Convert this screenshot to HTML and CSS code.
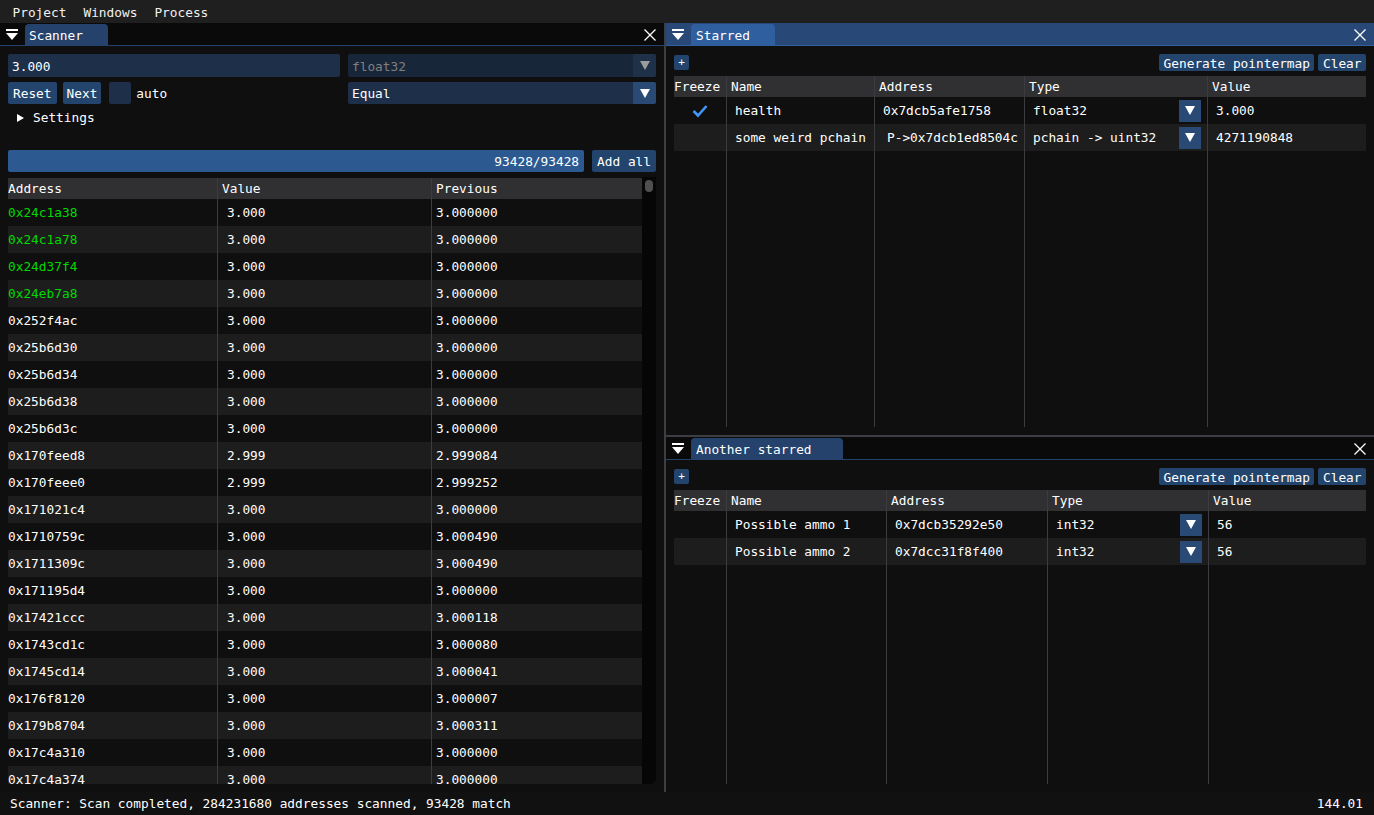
FILE: index.html
```html
<!DOCTYPE html>
<html lang="en">
<head>
  <meta charset="UTF-8">
  <title>Scanner</title>
  <link rel="stylesheet" href="styles.css">
</head>
<body>
  <div class="menubar">
    <span class="menu-item">Project</span>
    <span class="menu-item">Windows</span>
    <span class="menu-item">Process</span>
  </div>

  <div class="workspace">
    <!-- scanner window -->
    <section class="window scanner">
      <div class="tabbar">
        <span class="menu-btn"><svg width="12" height="12" viewBox="0 0 12 12"><rect x="0" y="0" width="12" height="2" fill="#fff"/><polygon points="0,4 12,4 6,11" fill="#fff"/></svg></span>
        <span class="tab tab-scanner">Scanner</span>
        <span class="close-btn"><svg width="12" height="12" viewBox="0 0 12 12"><path d="M0.5 0.5 L11.5 11.5 M11.5 0.5 L0.5 11.5" stroke="#fff" stroke-width="1.3"/></svg></span>
      </div>
      <div class="body">
        <div class="controls">
          <div class="frame input">3.000</div>
          <div class="frame combo disabled">
            <span class="combo-text">float32</span>
            <span class="combo-arrow"><svg width="10" height="9" viewBox="0 0 10 9"><polygon points="0,0 10,0 5,9" fill="#9c9c9c"/></svg></span>
          </div>
          <div class="btn-row">
            <span class="btn">Reset</span>
            <span class="btn">Next</span>
            <span class="checkbox"></span>
            <span class="check-label">auto</span>
          </div>
          <div class="frame combo">
            <span class="combo-text">Equal</span>
            <span class="combo-arrow"><svg width="10" height="9" viewBox="0 0 10 9"><polygon points="0,0 10,0 5,9" fill="#fff"/></svg></span>
          </div>
        </div>

        <div class="tree-node">
          <svg width="7" height="8" viewBox="0 0 7 8"><polygon points="0,0 7,4 0,8" fill="#fff"/></svg>
          <span>Settings</span>
        </div>

        <div class="progress-row">
          <div class="progress">93428/93428</div>
          <span class="btn">Add all</span>
        </div>

        <div class="scan-area">
          <div class="scan-table" id="scanTable">
            <div class="row scan-row header">
              <div class="cell">Address</div>
              <div class="cell">Value</div>
              <div class="cell">Previous</div>
            </div>
          </div>
          <div class="scrollbar"><div class="thumb"></div></div>
        </div>
      </div>
    </section>

    <div class="vsplit"></div>

    <div class="right-col">
      <!-- starred window -->
      <section class="window starred">
        <div class="tabbar focused">
          <span class="menu-btn"><svg width="12" height="12" viewBox="0 0 12 12"><rect x="0" y="0" width="12" height="2" fill="#fff"/><polygon points="0,4 12,4 6,11" fill="#fff"/></svg></span>
          <span class="tab tab-starred">Starred</span>
          <span class="close-btn"><svg width="12" height="12" viewBox="0 0 12 12"><path d="M0.5 0.5 L11.5 11.5 M11.5 0.5 L0.5 11.5" stroke="#fff" stroke-width="1.3"/></svg></span>
        </div>
        <div class="body">
          <div class="tools">
            <span class="btn small">+</span>
            <span class="btn tool right">Generate pointermap</span>
            <span class="btn tool">Clear</span>
          </div>
          <div class="star-table">
            <div class="row star-a header">
              <div class="cell">Freeze</div>
              <div class="cell">Name</div>
              <div class="cell">Address</div>
              <div class="cell">Type</div>
              <div class="cell">Value</div>
            </div>
            <div class="row star-a item">
              <div class="cell freeze"><svg width="16" height="14" viewBox="0 0 16 14"><polyline points="1.5,7 6,11.5 14.5,2" fill="none" stroke="#4296fa" stroke-width="2.6"/></svg></div>
              <div class="cell">health</div>
              <div class="cell">0x7dcb5afe1758</div>
              <div class="cell type">float32<span class="combo-arrow cell-arrow"><svg width="10" height="9" viewBox="0 0 10 9"><polygon points="0,0 10,0 5,9" fill="#fff"/></svg></span></div>
              <div class="cell">3.000</div>
            </div>
            <div class="row star-a item alt">
              <div class="cell freeze"></div>
              <div class="cell">some weird pchain</div>
              <div class="cell wide-pad">P-&gt;0x7dcb1ed8504c</div>
              <div class="cell type">pchain -&gt; uint32<span class="combo-arrow cell-arrow"><svg width="10" height="9" viewBox="0 0 10 9"><polygon points="0,0 10,0 5,9" fill="#fff"/></svg></span></div>
              <div class="cell">4271190848</div>
            </div>
            <div class="row star-a filler">
              <div class="cell"></div>
              <div class="cell"></div>
              <div class="cell"></div>
              <div class="cell"></div>
              <div class="cell"></div>
            </div>
          </div>
        </div>
      </section>

      <div class="hsplit"></div>

      <!-- another starred window -->
      <section class="window another">
        <div class="tabbar">
          <span class="menu-btn"><svg width="12" height="12" viewBox="0 0 12 12"><rect x="0" y="0" width="12" height="2" fill="#fff"/><polygon points="0,4 12,4 6,11" fill="#fff"/></svg></span>
          <span class="tab tab-another">Another starred</span>
          <span class="close-btn"><svg width="12" height="12" viewBox="0 0 12 12"><path d="M0.5 0.5 L11.5 11.5 M11.5 0.5 L0.5 11.5" stroke="#fff" stroke-width="1.3"/></svg></span>
        </div>
        <div class="body">
          <div class="tools">
            <span class="btn small">+</span>
            <span class="btn tool right">Generate pointermap</span>
            <span class="btn tool">Clear</span>
          </div>
          <div class="star-table">
            <div class="row star-b header">
              <div class="cell">Freeze</div>
              <div class="cell">Name</div>
              <div class="cell">Address</div>
              <div class="cell">Type</div>
              <div class="cell">Value</div>
            </div>
            <div class="row star-b item">
              <div class="cell freeze"></div>
              <div class="cell">Possible ammo 1</div>
              <div class="cell">0x7dcb35292e50</div>
              <div class="cell type">int32<span class="combo-arrow cell-arrow"><svg width="10" height="9" viewBox="0 0 10 9"><polygon points="0,0 10,0 5,9" fill="#fff"/></svg></span></div>
              <div class="cell">56</div>
            </div>
            <div class="row star-b item alt">
              <div class="cell freeze"></div>
              <div class="cell">Possible ammo 2</div>
              <div class="cell">0x7dcc31f8f400</div>
              <div class="cell type">int32<span class="combo-arrow cell-arrow"><svg width="10" height="9" viewBox="0 0 10 9"><polygon points="0,0 10,0 5,9" fill="#fff"/></svg></span></div>
              <div class="cell">56</div>
            </div>
            <div class="row star-b filler">
              <div class="cell"></div>
              <div class="cell"></div>
              <div class="cell"></div>
              <div class="cell"></div>
              <div class="cell"></div>
            </div>
          </div>
        </div>
      </section>
    </div>
  </div>

  <div class="statusbar">
    <span>Scanner: Scan completed, 284231680 addresses scanned, 93428 match</span>
    <span>144.01</span>
  </div>

  <script>
  const results = [
    ["0x24c1a38", "3.000", "3.000000", true],
    ["0x24c1a78", "3.000", "3.000000", true],
    ["0x24d37f4", "3.000", "3.000000", true],
    ["0x24eb7a8", "3.000", "3.000000", true],
    ["0x252f4ac", "3.000", "3.000000"],
    ["0x25b6d30", "3.000", "3.000000"],
    ["0x25b6d34", "3.000", "3.000000"],
    ["0x25b6d38", "3.000", "3.000000"],
    ["0x25b6d3c", "3.000", "3.000000"],
    ["0x170feed8", "2.999", "2.999084"],
    ["0x170feee0", "2.999", "2.999252"],
    ["0x171021c4", "3.000", "3.000000"],
    ["0x1710759c", "3.000", "3.000490"],
    ["0x1711309c", "3.000", "3.000490"],
    ["0x171195d4", "3.000", "3.000000"],
    ["0x17421ccc", "3.000", "3.000118"],
    ["0x1743cd1c", "3.000", "3.000080"],
    ["0x1745cd14", "3.000", "3.000041"],
    ["0x176f8120", "3.000", "3.000007"],
    ["0x179b8704", "3.000", "3.000311"],
    ["0x17c4a310", "3.000", "3.000000"],
    ["0x17c4a374", "3.000", "3.000000"]
  ];

  const table = document.getElementById("scanTable");
  results.forEach((r, i) => {
    const row = document.createElement("div");
    row.className = "row scan-row item" + (i % 2 ? " alt" : "");
    row.innerHTML =
      `<div class="cell${r[3] ? " green" : ""}">${r[0]}</div>` +
      `<div class="cell value">${r[1]}</div>` +
      `<div class="cell">${r[2]}</div>`;
    table.appendChild(row);
  });
  </script>
</body>
</html>
```

FILE: styles.css
```css
:root {
  --window-bg: #0f0f0f;
  --frame-bg: #1d2f49;
  --button: #23456d;
  --header-bg: #303033;
  --row-alt: #1d1d1d;
  --border: #3b3b40;
  --split: #3d3d44;
  --tab-idle: #24426b;
}

* {
  box-sizing: border-box;
}

body {
  margin: 0;
  width: 1374px;
  height: 815px;
  overflow: hidden;
  background: var(--window-bg);
  color: #fff;
  font-family: "DejaVu Sans Mono", "Liberation Mono", monospace;
  font-size: 12.8px;
  display: flex;
  flex-direction: column;
  white-space: nowrap;
}

.menubar {
  height: 23px;
  flex: none;
  background: #1f1f1f;
  display: flex;
  align-items: center;
  padding: 2px 0 0 4px;
}

.menu-item {
  padding: 0 8.5px;
  color: #f0f0f0;
}

.workspace {
  height: 769px;
  flex: none;
  display: flex;
}

.window {
  display: flex;
  flex-direction: column;
  background: var(--window-bg);
  overflow: hidden;
}

.scanner {
  width: 664px;
}

.vsplit {
  width: 2px;
  background: var(--split);
}

.right-col {
  flex: 1;
  display: flex;
  flex-direction: column;
}

.starred {
  height: 412px;
}

.hsplit {
  height: 2px;
  background: var(--split);
}

.another {
  flex: 1;
}

/* tab bar */
.tabbar {
  height: 23px;
  flex: none;
  display: flex;
  align-items: flex-end;
  background: #0a0a0a;
  border-bottom: 1px solid var(--tab-idle);
}

.tabbar.focused {
  background: #284978;
  border-bottom-color: #2f5f9e;
}

.menu-btn {
  width: 25px;
  align-self: center;
  display: flex;
  padding-left: 6px;
  padding-top: 1px;
}

.tab {
  height: 21px;
  display: flex;
  align-items: center;
  padding-left: 4px;
  padding-top: 2px;
  background: var(--tab-idle);
  border-radius: 4px 4px 0 0;
}

.tabbar.focused .tab {
  background: #2f5f9e;
}

.tab-scanner { width: 83px; }
.tab-starred { width: 84px; padding-left: 5px; }
.tab-another { width: 152px; padding-left: 5px; }

.close-btn {
  margin-left: auto;
  margin-right: 8px;
  align-self: center;
  display: flex;
  padding-top: 1px;
}

/* window body */
.body {
  flex: 1;
  min-height: 0;
  padding: 8px;
  display: flex;
  flex-direction: column;
}

.controls {
  display: grid;
  grid-template-columns: 332px 1fr;
  grid-template-rows: 23px 22px;
  column-gap: 8px;
  row-gap: 5px;
}

.frame {
  background: var(--frame-bg);
  border-radius: 2px;
  display: flex;
  align-items: center;
}

.input {
  padding: 2px 4px 0;
}

.combo-text {
  flex: 1;
  padding-left: 4px;
}

.combo-arrow {
  width: 23px;
  align-self: stretch;
  background: #284a75;
  border-radius: 0 2px 2px 0;
  display: flex;
  align-items: center;
  justify-content: center;
}

.combo.disabled {
  background: #18263a;
}

.combo.disabled .combo-text {
  color: #808080;
  padding-top: 2px;
}

.combo.disabled .combo-arrow {
  background: #1f3149;
}

.btn-row {
  display: flex;
  align-items: stretch;
}

.btn {
  background: var(--button);
  border-radius: 2px;
  padding: 0 5px;
  display: flex;
  align-items: center;
}

.btn-row .btn + .btn {
  margin-left: 6px;
  padding: 0 4px;
}

.checkbox {
  width: 22px;
  margin-left: 8px;
  background: var(--frame-bg);
  border-radius: 2px;
}

.check-label {
  margin-left: 5px;
  display: flex;
  align-items: center;
}

.tree-node {
  height: 19px;
  margin-top: 4px;
  display: flex;
  align-items: center;
  padding-left: 9px;
}

.tree-node span {
  margin-left: 9px;
}

.progress-row {
  margin-top: 23px;
  height: 22px;
  display: flex;
  gap: 8px;
}

.progress {
  width: 577px;
  background: #2c5a90;
  border-radius: 2px;
  display: flex;
  align-items: center;
  justify-content: flex-end;
  padding-right: 5px;
}

/* scan results table */
.scan-area {
  margin-top: 5px;
  flex: 1;
  min-height: 0;
  display: flex;
}

.scan-table {
  width: 634px;
  overflow: hidden;
  padding-top: 1px;
}

.row {
  display: grid;
}

.scan-row {
  grid-template-columns: 209px 214px 211px;
}

.row.header {
  height: 21px;
  background: var(--header-bg);
}

.row.item {
  height: 27px;
}

.row.alt {
  background: var(--row-alt);
}

.cell {
  display: flex;
  align-items: center;
  overflow: hidden;
}

.cell + .cell {
  border-left: 1px solid var(--border);
  padding-left: 4px;
}

.scan-row.item .cell.value {
  padding-left: 9px;
}

.green {
  color: #00d900;
}

.scrollbar {
  width: 14px;
  background: #060606;
  border-radius: 0 0 6px 0;
  padding: 3px;
}

.thumb {
  height: 12px;
  background: #4f4f4f;
  border-radius: 4px;
}

/* starred tables */
.tools {
  height: 17px;
  display: flex;
  align-items: center;
  gap: 4px;
}

.btn.small {
  width: 15px;
  height: 15px;
  padding: 0;
  justify-content: center;
  font-size: 11px;
}

.btn.tool {
  height: 17px;
  padding: 2px 4.5px 0;
}

.btn.right {
  margin-left: auto;
}

.star-table {
  margin-top: 5px;
  flex: 1;
  display: flex;
  flex-direction: column;
}

.star-a {
  grid-template-columns: 52px 148px 150px 183px 1fr;
}

.star-b {
  grid-template-columns: 52px 160px 161px 161px 1fr;
}

.star-table .item .cell + .cell {
  padding-left: 8px;
}

.star-table .item .cell.wide-pad {
  padding-left: 12px;
}

.cell.freeze {
  justify-content: center;
}

.cell.type {
  justify-content: space-between;
  padding-right: 6px;
}

.cell-arrow {
  width: 22px;
  height: 22px;
  align-self: center;
  border-radius: 0;
}

.row.filler {
  flex: 1;
}

.statusbar {
  flex: 1;
  background: #111;
  display: flex;
  align-items: center;
  justify-content: space-between;
  padding: 0 11px 0 10px;
}
```
